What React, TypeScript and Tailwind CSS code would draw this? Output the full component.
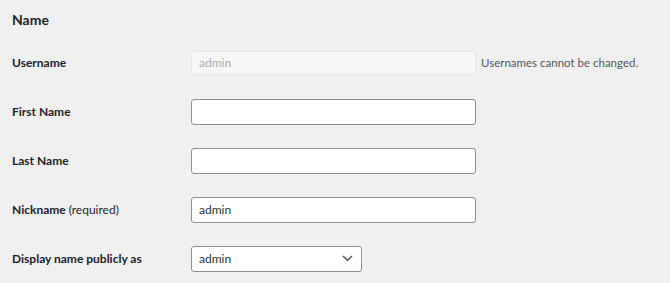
import React from "react";

const font = { fontFamily: 'Lato, "Noto Sans", sans-serif' };

function Row({ label, children }: { label: React.ReactNode; children: React.ReactNode }) {
  return (
    <div className="flex h-[49px] items-center">
      <div className="w-[179px] shrink-0 text-[12px] font-bold text-[#1d2327]">{label}</div>
      <div className="flex items-center">{children}</div>
    </div>
  );
}

function TextInput({ value = "" }: { value?: string }) {
  return (
    <div className="flex h-[26px] w-[285px] items-center rounded-[3px] border border-[#8c8f94] bg-white px-[7px] text-[12px] text-[#2c3338]">
      {value}
    </div>
  );
}

export default function App() {
  return (
    <div className="h-[283px] w-[670px] bg-[#f0f0f1] pl-[12px] text-[#1d2327]" style={font}>
      <div className="flex h-[38px] items-center text-[14px] font-bold">Name</div>
      <Row label="Username">
        <div className="flex h-[24px] w-[285px] items-center rounded-[3px] border border-[#e4e4e6] bg-[#f6f7f7] px-[7px] text-[12px] text-[#a7aaad]">
          admin
        </div>
        <span className="ml-[5px] text-[11.5px] text-[#50575e]">Usernames cannot be changed.</span>
      </Row>
      <Row label="First Name">
        <TextInput />
      </Row>
      <Row label="Last Name">
        <TextInput />
      </Row>
      <Row label={<span>Nickname <span className="font-normal">(required)</span></span>}>
        <TextInput value="admin" />
      </Row>
      <Row label="Display name publicly as">
        <div className="flex h-[26px] w-[171px] items-center justify-between rounded-[3px] border border-[#8c8f94] bg-white pl-[7px] pr-[8px] text-[12px] text-[#2c3338]">
          <span>admin</span>
          <svg width="11" height="7" viewBox="0 0 11 7" fill="none">
            <path d="M1 1l4.5 4.5L10 1" stroke="#50575e" strokeWidth="1.5" />
          </svg>
        </div>
      </Row>
    </div>
  );
}
